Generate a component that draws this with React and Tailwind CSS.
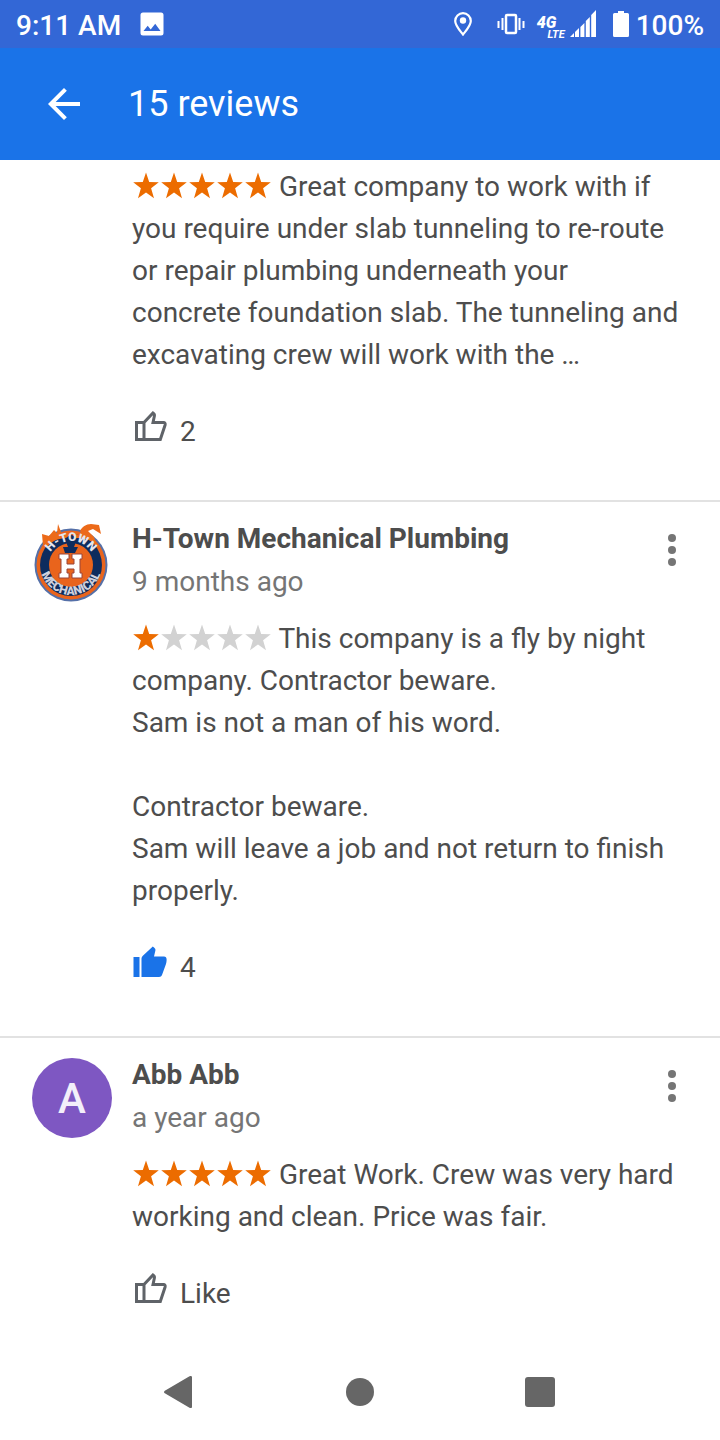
import React, { useState } from "react";

const reviews = [
  {
    id: 1,
    rating: 5,
    likes: 2,
    text: "Great company to work with if you require under slab tunneling to re-route or repair plumbing underneath your concrete foundation slab. The tunneling and excavating crew will work with the …",
  },
  {
    id: 2,
    name: "H-Town Mechanical Plumbing",
    date: "9 months ago",
    rating: 1,
    likes: 4,
    liked: true,
    avatar: "logo",
    text: "This company is a fly by night company. Contractor beware.\nSam is not a man of his word.\n\nContractor beware.\nSam will leave a job and not return to finish properly.",
  },
  {
    id: 3,
    name: "Abb Abb",
    date: "a year ago",
    rating: 5,
    likes: 0,
    avatar: "letter",
    text: "Great Work. Crew was very hard working and clean. Price was fair.",
  },
];

function StatusBar() {
  return (
    <div className="flex h-12 items-center justify-between bg-[#3367d6] px-4 text-[28px] font-medium text-white">
      <div className="flex items-center gap-[19px]">
        <span className="pt-[3px]">9:11 AM</span>
        <svg className="size-6" viewBox="0 0 24 24" fill="currentColor" aria-hidden="true">
          <path fillRule="evenodd" d="M3 .5h18A2.5 2.5 0 0 1 23.5 3v18a2.5 2.5 0 0 1-2.5 2.5H3A2.5 2.5 0 0 1 .5 21V3A2.5 2.5 0 0 1 3 .5zM3.5 19h17l-5.3-7.2-4.5 5.6-3-3.6z" />
        </svg>
      </div>
      <div className="flex items-center">
        <svg className="mr-6 h-6 w-5" viewBox="0 0 20 24" fill="none" stroke="currentColor" strokeWidth="2.2" aria-hidden="true">
          <path d="M10 22.5C6 17.5 2.2 13.5 2.2 9a7.8 7.8 0 0 1 15.6 0c0 4.5-3.8 8.5-7.8 13.5z" />
          <circle cx="10" cy="8.5" r="3.2" fill="currentColor" stroke="none" />
        </svg>
        <svg className="mr-3 h-6 w-7" viewBox="0 0 28 24" fill="none" stroke="currentColor" aria-hidden="true">
          <rect x="9" y="3" width="10" height="18" rx="1" strokeWidth="2.5" />
          <path d="M5.5 6v12M22.5 6v12M1.5 9v7M26.5 9v7" strokeWidth="2" />
        </svg>
        <div className="mr-1 flex w-7 flex-col pt-2 italic">
          <span className="text-[16px] leading-[14px] font-black">4G</span>
          <span className="self-end text-[11px] leading-[10px] font-bold">LTE</span>
        </div>
        <svg className="mr-4 h-7 w-7" viewBox="0 0 28 28" fill="currentColor" aria-hidden="true">
          <path d="M1 27l4-4v4zM6 22l4-4v9H6zM11.4 17l4-4v14h-4zM16.8 11l4-4v20h-4zM22.2 5 27 0v27h-4.800z" />
        </svg>
        <svg className="mr-[7px] h-7 w-4" viewBox="0 0 16 28" fill="currentColor" aria-hidden="true">
          <path d="M5 1h6v2h3.5A1.5 1.5 0 0 1 16 4.5v21a1.5 1.5 0 0 1-1.5 1.5h-13A1.5 1.5 0 0 1 0 25.5v-21A1.5 1.5 0 0 1 1.5 3H5z" />
        </svg>
        <span className="pt-[3px]">100%</span>
      </div>
    </div>
  );
}

function Stars({ rating }) {
  return (
    <span role="img" aria-label={`${rating} out of 5 stars`}>
      {[1, 2, 3, 4, 5].map((n) => (
        <svg
          key={n}
          className={n <= rating ? "inline size-7 align-[-4px] text-[#ec6c00]" : "inline size-7 align-[-4px] text-[#d2d2d2]"}
          viewBox="0 0 28 28"
          fill="currentColor"
        >
          <path d="M14 .5l3.2 9.6 9.6.2-7.7 6 2.9 9.9-8-5.7-8 5.7 2.9-9.9-7.7-6 9.6-.2z" />
        </svg>
      ))}
    </span>
  );
}

function ThumbIcon({ filled }) {
  if (filled) {
    return (
      <svg className="size-9 text-[#1a73e8]" viewBox="0 1 36 36" fill="currentColor" aria-hidden="true">
        <path d="M1.5 12h6v20h-6zM9.5 32V13.5c0-1 .4-1.8 1.1-2.5L20.8 1.5l1.5 1.2c1 .9 1.3 1.7 1.1 2.9L22 11.5h10c1.7 0 2.6 1.2 2.6 2.7 0 2-.1 3.3-.7 5L30 30c-.5 1.3-1.5 2-3 2z" />
      </svg>
    );
  }
  return (
    <svg className="size-9 text-[#5f6368]" viewBox="0 1 36 36" fill="none" stroke="currentColor" strokeWidth="3" aria-hidden="true">
      <path d="M4.5 13.5H12v17H4.5zM12 13.5l9-9.5c1.3.8 1.7 1.7 1.4 3L21 13.5h10.500c1.4 0 2 1 1.6 2.5l-4.8 14.500H12" />
    </svg>
  );
}

function TownLogo() {
  return (
    <svg className="size-20" viewBox="0 0 80 80" role="img" aria-label="H-Town Mechanical">
      <defs>
        <path id="logo-top" d="M15 43a24 24 0 0 1 48 0" />
        <path id="logo-bottom" d="M8 42a31 31 0 0 0 62 0" />
      </defs>
      <circle cx="39" cy="43" r="36.5" fill="#5570a8" />
      <circle cx="39" cy="43" r="34.5" fill="#e9641c" />
      <circle cx="39" cy="43" r="31" fill="#0d2c5e" />
      <path d="M11 24l-1-12 7 2 5-6 3 3 1-9 3 8-3 4c8-3 17-3 25 0l-3-5c2-4 6-7 11-7l8 1 2 9-8-5-5 2 6 6 3 9c-5-6-12-8-20-8-12-1-22 0-29 8z" fill="#ec6a19" />
      <circle cx="39" cy="43" r="22" fill="#e9641c" />
      <path d="M33 17l6-5 6 5-3 8h-6z" fill="#0d2c5e" />
      <path d="M31 25h15l-3 6H33z" fill="#0d2c5e" />
      <text fontSize="12" fontWeight="900" fill="#e5e5ed" textAnchor="middle">
        <textPath href="#logo-top" startOffset="50%">H-TOWN</textPath>
      </text>
      <text fontSize="12" fontWeight="900" fill="#cfd0dc" textAnchor="middle">
        <textPath href="#logo-bottom" startOffset="50%">MECHANICAL</textPath>
      </text>
      <path d="M27 32h10v5h-2v5h7v-5h-2v-5h10v5h-2v14h2v5H40v-5h2v-4h-7v4h2v5H27v-5h2V37h-2z" fill="#fff" stroke="#9a4538" strokeWidth="1" />
    </svg>
  );
}

function Avatar({ review }) {
  if (review.avatar === "logo") return <TownLogo />;
  return (
    <div className="flex size-20 items-center justify-center rounded-full bg-[#7e57c2] pt-[2px] text-[42px] font-medium text-[#f3effa]">
      {review.name[0]}
    </div>
  );
}

function Review({ review }) {
  const [liked, setLiked] = useState(Boolean(review.liked));
  const likes = review.likes + (liked ? 1 : 0) - (review.liked ? 1 : 0);

  return (
    <article className={review.name ? "flex gap-5 px-8 pt-4" : "flex gap-5 px-8 pt-[6px]"}>
      <div className="w-20 shrink-0 pt-1">{review.name && <Avatar review={review} />}</div>
      <div className="min-w-0 flex-1">
        {review.name && (
          <header className="mb-[15px] flex items-start justify-between">
            <div>
              <h2 className="font-bold">{review.name}</h2>
              <p className="pt-px text-[#757575]">{review.date}</p>
            </div>
            <button type="button" aria-label="More options" className="mt-3 flex w-8 justify-center text-[#757575]">
              <svg className="h-10 w-2" viewBox="0 0 8 40" fill="currentColor" aria-hidden="true">
                <circle cx="4" cy="8" r="4" />
                <circle cx="4" cy="20" r="4" />
                <circle cx="4" cy="32" r="4" />
              </svg>
            </button>
          </header>
        )}
        <p className="pr-2 whitespace-pre-line">
          <Stars rating={review.rating} /> {review.text}
        </p>
        <button
          type="button"
          aria-pressed={liked}
          onClick={() => setLiked(!liked)}
          className="mt-[34px] mb-[46px] flex h-11 items-start gap-3"
        >
          <ThumbIcon filled={liked} />
          <span className="pt-px">{likes > 0 ? likes : "Like"}</span>
        </button>
      </div>
    </article>
  );
}

function NavBar() {
  return (
    <nav className="fixed inset-x-0 bottom-0 flex h-24 items-center justify-center gap-[148px] bg-white text-[#666]">
      <button type="button" aria-label="Back">
        <svg className="size-8" viewBox="0 0 32 32" fill="currentColor" aria-hidden="true">
          <path d="M25.5.3.8 14.7q-1.600 1.3 0 2.6L25.5 31.7q2.5 1 2.5-1V1.3q0-2-2.5-1z" />
        </svg>
      </button>
      <button type="button" aria-label="Home">
        <svg className="size-8" viewBox="0 0 32 32" fill="currentColor" aria-hidden="true">
          <circle cx="16" cy="16" r="14" />
        </svg>
      </button>
      <button type="button" aria-label="Recent apps">
        <svg className="size-8" viewBox="0 0 32 32" fill="currentColor" aria-hidden="true">
          <rect x="1" y="1" width="30" height="30" rx="3" />
        </svg>
      </button>
    </nav>
  );
}

function App() {
  return (
    <div className="min-h-screen bg-white font-[Roboto,sans-serif] text-[28px] leading-[42px] text-[#4d4d4d]">
      <StatusBar />
      <header className="flex h-28 items-center gap-12 bg-[#1a73e8] pl-12 text-white">
        <button type="button" aria-label="Go back">
          <svg className="size-8" viewBox="4 4 16 16" fill="currentColor" aria-hidden="true">
            <path d="M20 11H7.83l5.590-5.590L12 4l-8 8 8 8 1.410-1.410L7.830 13H20z" />
          </svg>
        </button>
        <h1 className="text-[36px]">15 reviews</h1>
      </header>
      <main className="divide-y-2 divide-[#e2e2e2]">
        {reviews.map((review) => (
          <Review key={review.id} review={review} />
        ))}
      </main>
      <NavBar />
    </div>
  );
}

export default App;
